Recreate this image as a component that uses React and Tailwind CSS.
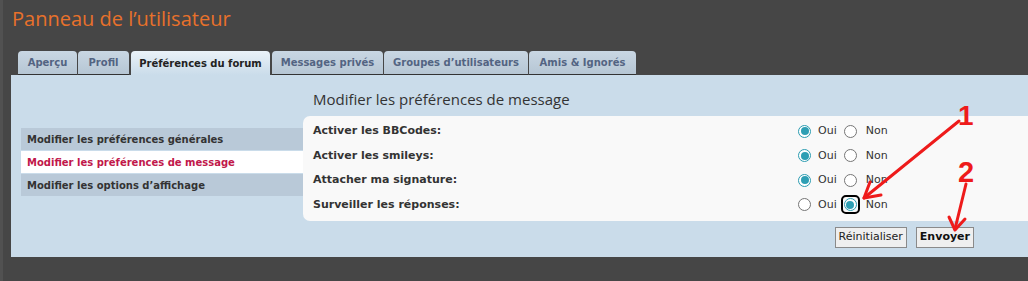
import { useState } from "react";

const tabs = [
  { label: "Aperçu", w: "w-[59px]" },
  { label: "Profil", w: "w-[51px]" },
  { label: "Préférences du forum", w: "w-[139px]", active: true },
  { label: "Messages privés", w: "w-[111px]" },
  { label: "Groupes d’utilisateurs", w: "w-[144px]" },
  { label: "Amis & Ignorés", w: "w-[107px]" },
];

const menu = [
  { label: "Modifier les préférences générales" },
  { label: "Modifier les préférences de message", active: true },
  { label: "Modifier les options d’affichage" },
];

const Radio = ({ checked, focused }) => (
  <span
    className={
      "flex items-center justify-center w-[19px] h-[19px] rounded-[5px] " +
      (focused ? "border-2 border-black" : "border-2 border-transparent")
    }
  >
    <span
      className={
        "flex items-center justify-center w-[13px] h-[13px] rounded-full bg-white border " +
        (checked ? "border-[#2b9cb1]" : "border-[#767676]")
      }
    >
      {checked && <span className="w-[8px] h-[8px] rounded-full bg-[#2e9fb4]" />}
    </span>
  </span>
);

const App = () => {
  const [prefs, setPrefs] = useState([
    { label: "Activer les BBCodes:", value: true },
    { label: "Activer les smileys:", value: true },
    { label: "Attacher ma signature:", value: true },
    { label: "Surveiller les réponses:", value: false, focused: true },
  ]);

  const setPref = (i, v) =>
    setPrefs(prefs.map((p, j) => (j === i ? { ...p, value: v } : p)));

  return (
    <div
      className="relative w-[1028px] h-[281px] overflow-hidden bg-[#464646] border-l-[3px] border-[#515151]"
      style={{ fontFamily: "'DejaVu Sans', Verdana, sans-serif" }}
    >
      <h1
        className="pl-[9px] pt-[6px] text-[20px] leading-[26px] text-[#e8712b]"
        style={{ fontFamily: "'Open Sans', sans-serif" }}
      >
        Panneau de l’utilisateur
      </h1>

      <div className="flex gap-[1px] ml-[15px] mt-[19px]">
        {tabs.map((t) => (
          <div
            key={t.label}
            className={
              "h-[24px] flex items-center justify-center rounded-t-[4px] text-[10px] font-bold " +
              t.w +
              " " +
              (t.active
                ? "bg-gradient-to-b from-[#eaf2f8] to-[#cadcea] text-[#222] mx-[1px]"
                : "bg-gradient-to-b from-[#c9d7e3] to-[#b6c6d4] text-[#536482] border-b border-[#333]")
            }
          >
            {t.label}
          </div>
        ))}
      </div>

      <div className="ml-[8px] h-[182px] bg-[#cadcea] flex">
        <div className="w-[282px] ml-[10px] pt-[53px] shrink-0">
          {menu.map((m) => (
            <div
              key={m.label}
              className={
                "h-[22px] mb-[1px] flex items-center pl-[6px] text-[10px] font-bold " +
                (m.active ? "bg-white text-[#c1174a]" : "bg-[#b9c9d8] text-[#333]")
              }
            >
              {m.label}
            </div>
          ))}
        </div>

        <div className="flex-1 pt-[14px]">
          <h2
            className="pl-[10px] text-[15px] leading-[20px] text-[#333]"
            style={{ fontFamily: "'Open Sans', sans-serif" }}
          >
            Modifier les préférences de message
          </h2>
          <div className="mt-[7px] h-[105px] bg-[#f9f9f9] rounded-l-[7px] pt-[3px]">
            {prefs.map((p, i) => (
              <div key={p.label} className="h-[24.5px] flex items-center pl-[10px]">
                <span className="w-[482px] text-[11px] font-bold text-[#333]">{p.label}</span>
                <label className="flex items-center cursor-pointer" onClick={() => setPref(i, true)}>
                  <Radio checked={p.value} />
                  <span className="ml-[4px] mr-[4px] text-[11px] text-[#333]">Oui</span>
                </label>
                <label className="flex items-center cursor-pointer" onClick={() => setPref(i, false)}>
                  <Radio checked={!p.value} focused={p.focused} />
                  <span className="ml-[6px] text-[11px] text-[#333]">Non</span>
                </label>
              </div>
            ))}
          </div>
          <div className="flex justify-end gap-[9px] mt-[6px] pr-[54px]">
            <button className="h-[21px] px-[3px] bg-[#efefef] border border-[#8a8a8a] text-[11px] text-[#222]">
              Réinitialiser
            </button>
            <button className="h-[21px] px-[3px] bg-[#efefef] border border-[#8a8a8a] text-[11px] font-bold text-[#111]">
              Envoyer
            </button>
          </div>
        </div>
      </div>

      <svg className="absolute left-0 top-0 pointer-events-none" width="1028" height="281">
        <g stroke="#ee1b1b" strokeWidth="3" fill="none" strokeLinecap="round" strokeLinejoin="round">
          <line x1="956" y1="121" x2="861" y2="198" />
          <polyline points="867,182 861,198 878,195" />
          <line x1="963" y1="184" x2="952" y2="229" />
          <polyline points="946,217 952,230 962,219" />
        </g>
        <text x="955" y="125" fill="#ee1b1b" fontSize="28" fontWeight="bold" fontFamily="Liberation Sans, Arial, sans-serif">1</text>
        <text x="955" y="182" fill="#ee1b1b" fontSize="29" fontWeight="bold" fontFamily="Liberation Sans, Arial, sans-serif">2</text>
      </svg>
    </div>
  );
};

export default App;
